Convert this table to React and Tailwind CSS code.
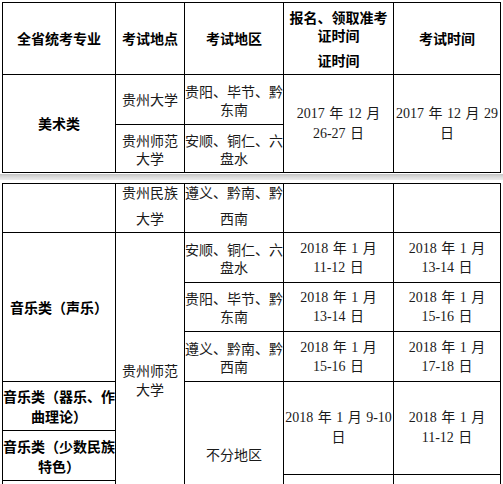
import React from "react";

const C = ({ className = "", lines = [], bold = false, leading = "leading-[19px]", extra = "" }) => (
  <div
    className={`border-r border-b border-black flex flex-col items-center justify-center text-center whitespace-nowrap ${className}`}
  >
    {lines.map((l, i) => (
      <div
        key={i}
        className={`${leading} ${bold ? "font-bold text-black" : "text-[#1a1a1a]"} ${extra}`}
      >
        {l}
      </div>
    ))}
  </div>
);

const D = "[word-spacing:1px] font-['Liberation_Serif','Noto_Sans_CJK_SC',serif]";

export default function App() {
  return (
    <div className="h-[484px] w-[503px] overflow-hidden bg-white text-[14px] font-['Noto_Sans_CJK_SC',sans-serif]">
      {/* top table */}
      <div className="ml-[2px] mt-[2px] grid w-fit grid-cols-[113px_69px_99px_110px_107px] grid-rows-[72px_50px_48px] border-l border-t border-black">
        <C className="col-start-1 row-start-1" bold lines={["全省统考专业"]} />
        <C className="col-start-2 row-start-1" bold lines={["考试地点"]} />
        <C className="col-start-3 row-start-1" bold lines={["考试地区"]} />
        <div className="col-start-4 row-start-1 flex flex-col items-center justify-center border-b border-r border-black text-center font-bold text-black">
          <div className="leading-[18px]">报名、领取准考</div>
          <div className="leading-[18px]">证时间</div>
          <div className="mt-[7px] leading-[18px]">证时间</div>
        </div>
        <C className="col-start-5 row-start-1" bold lines={["考试时间"]} />

        <C className="col-start-1 row-start-2 row-span-2" bold lines={["美术类"]} />
        <C className="col-start-2 row-start-2" lines={["贵州大学"]} />
        <C className="col-start-3 row-start-2" leading="leading-[18px]" lines={["贵阳、毕节、黔", "东南"]} />
        <C
          className="col-start-4 row-start-2 row-span-2"
          leading="leading-[20px]"
          extra={D}
          lines={["2017 年 12 月", "26-27 日"]}
        />
        <C
          className="col-start-5 row-start-2 row-span-2"
          leading="leading-[20px]"
          extra={D}
          lines={["2017 年 12 月 29", "日"]}
        />
        <C className="col-start-2 row-start-3" leading="leading-[18px]" lines={["贵州师范", "大学"]} />
        <C className="col-start-3 row-start-3" leading="leading-[18px]" lines={["安顺、铜仁、六", "盘水"]} />
      </div>

      {/* page break band */}
      <div className="flex h-[10px] w-full flex-col">
        <div className="h-[1px] bg-white" />
        <div className="h-[6px] bg-gradient-to-b from-[#c4c4c4] via-[#dcdcdc] to-[#ededed]" />
        <div className="h-[3px] bg-white" />
      </div>

      {/* bottom table */}
      <div className="ml-[2px] grid w-fit grid-cols-[113px_69px_99px_110px_107px] grid-rows-[49px_50px_49px_50px_49px_44px_6px_47px] border-l border-t border-black">
        <C className="col-start-1 row-start-1" lines={[]} />
        <div className="col-start-2 row-start-1 flex flex-col items-center justify-center border-b border-r border-black pb-[6px] text-center text-[#1a1a1a]">
          <div className="leading-[26px]">贵州民族</div>
          <div className="leading-[26px]">大学</div>
        </div>
        <div className="col-start-3 row-start-1 flex flex-col items-center justify-center whitespace-nowrap border-b border-r border-black pb-[6px] text-center text-[#1a1a1a]">
          <div className="leading-[26px]">遵义、黔南、黔</div>
          <div className="leading-[26px]">西南</div>
        </div>
        <C className="col-start-4 row-start-1" lines={[]} />
        <C className="col-start-5 row-start-1" lines={[]} />

        <C className="col-start-1 row-start-2 row-span-3" bold lines={["音乐类（声乐）"]} />
        <C className="col-start-2 row-start-2 row-span-7" leading="leading-[19px]" lines={["贵州师范", "大学"]} />

        <C className="col-start-3 row-start-2" leading="leading-[18px]" lines={["安顺、铜仁、六", "盘水"]} />
        <C className="col-start-4 row-start-2" extra={D} lines={["2018 年 1 月", "11-12 日"]} />
        <C className="col-start-5 row-start-2" extra={D} lines={["2018 年 1 月", "13-14 日"]} />

        <C className="col-start-3 row-start-3" leading="leading-[18px]" lines={["贵阳、毕节、黔", "东南"]} />
        <C className="col-start-4 row-start-3" extra={D} lines={["2018 年 1 月", "13-14 日"]} />
        <C className="col-start-5 row-start-3" extra={D} lines={["2018 年 1 月", "15-16 日"]} />

        <C className="col-start-3 row-start-4" leading="leading-[18px]" lines={["遵义、黔南、黔", "西南"]} />
        <C className="col-start-4 row-start-4" extra={D} lines={["2018 年 1 月", "15-16 日"]} />
        <C className="col-start-5 row-start-4" extra={D} lines={["2018 年 1 月", "17-18 日"]} />

        <C className="col-start-1 row-start-5" bold leading="leading-[20px]" lines={["音乐类（器乐、作", "曲理论）"]} />
        <C className="col-start-3 row-start-5 row-span-4" lines={["不分地区"]} />
        <C
          className="col-start-4 row-start-5 row-span-2"
          extra={D}
          leading="leading-[20px]"
          lines={["2018 年 1 月 9-10", "日"]}
        />
        <C
          className="col-start-5 row-start-5 row-span-2"
          extra={D}
          leading="leading-[20px]"
          lines={["2018 年 1 月", "11-12 日"]}
        />

        <C className="col-start-1 row-start-6 row-span-2" bold leading="leading-[20px]" lines={["音乐类（少数民族", "特色）"]} />

        <C className="col-start-1 row-start-8" lines={[]} />
        <C className="col-start-4 row-start-7 row-span-2" lines={[]} />
        <C className="col-start-5 row-start-7 row-span-2" lines={[]} />
      </div>
    </div>
  );
}
